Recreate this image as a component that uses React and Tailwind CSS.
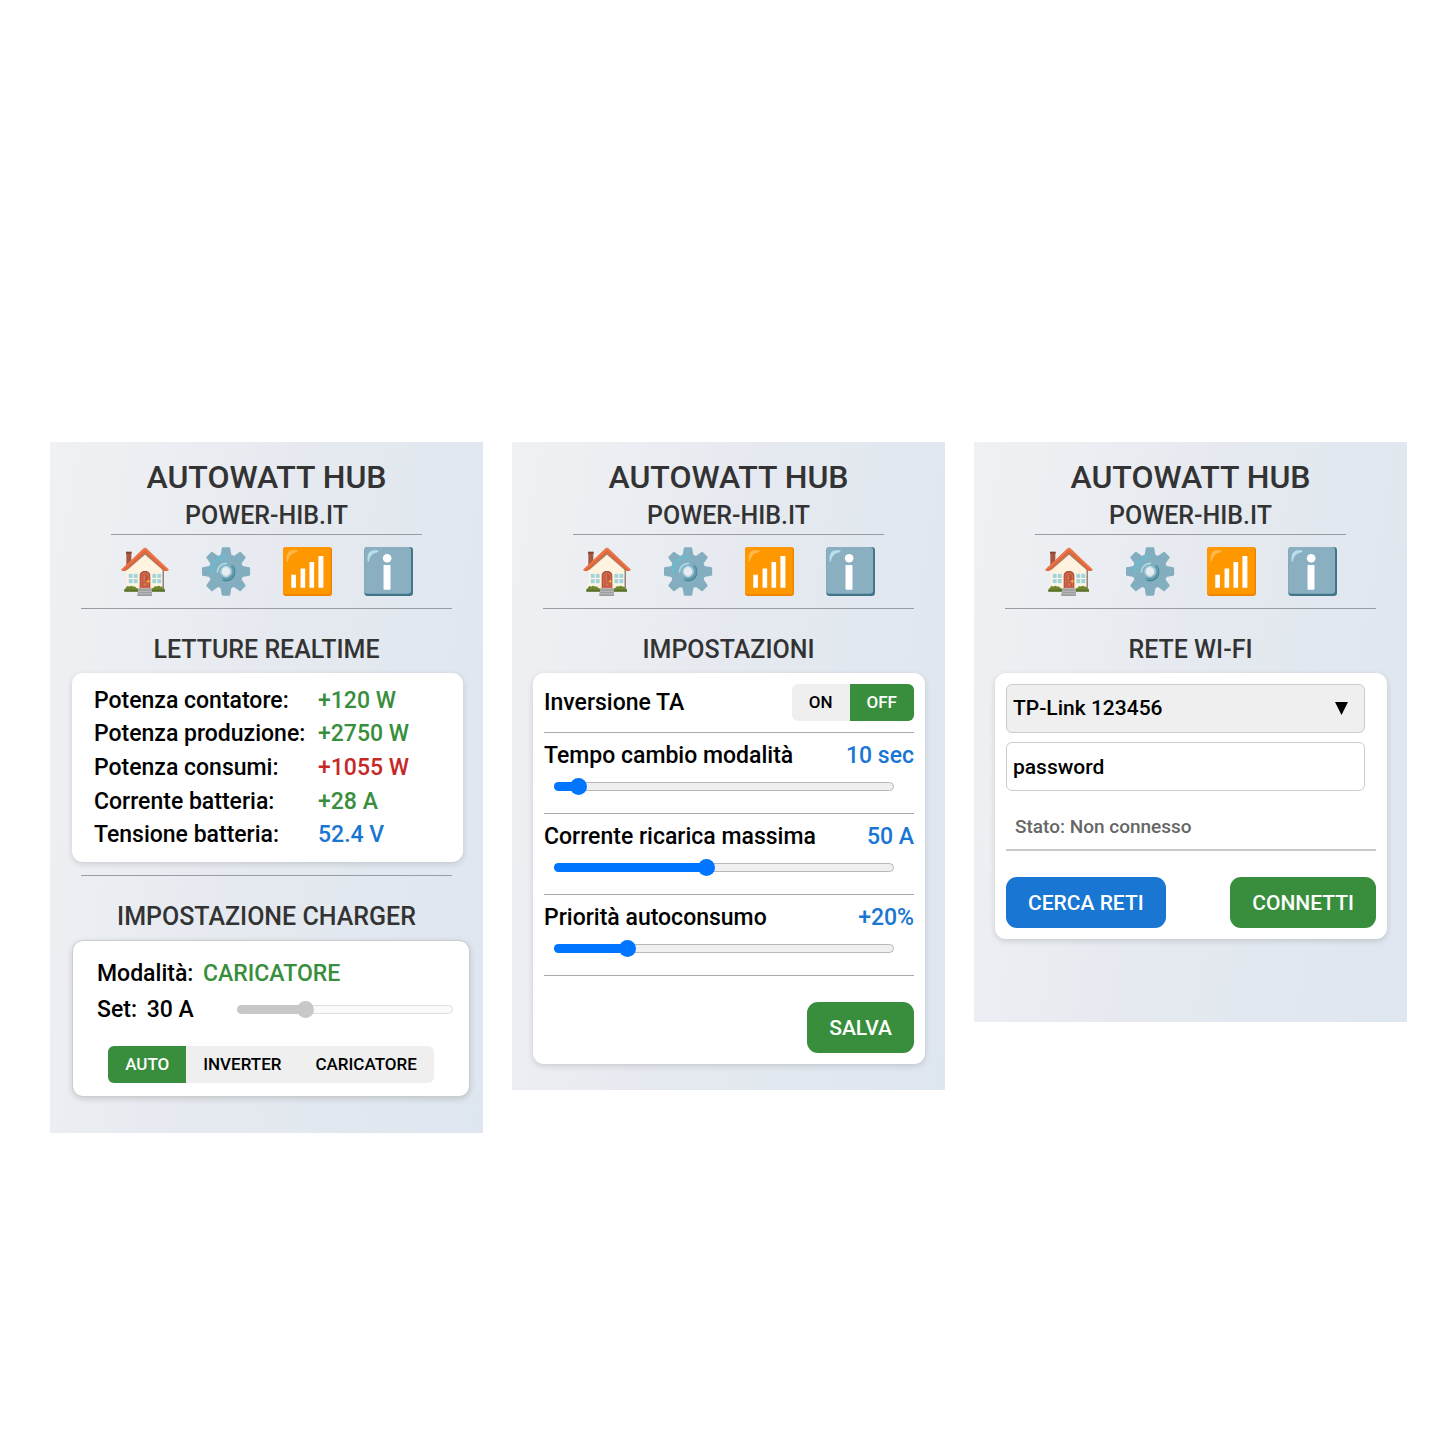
import { useState } from "react";

const cardClass = "mr-5 rounded-[11px] bg-white shadow-[0_2px_6px_rgba(0,0,0,0.14)]";
const actionClass = "h-[51px] rounded-[11px] px-[22px] pt-0.5 text-[21px] text-white cursor-pointer";

const readings = [
  { label: "Potenza contatore:", value: "+120 W", color: "text-[#388e3c]" },
  { label: "Potenza produzione:", value: "+2750 W", color: "text-[#388e3c]" },
  { label: "Potenza consumi:", value: "+1055 W", color: "text-[#c62828]" },
  { label: "Corrente batteria:", value: "+28 A", color: "text-[#388e3c]" },
  { label: "Tensione batteria:", value: "52.4 V", color: "text-[#1976d2]" },
];

const HomeIcon = () => (
  <svg viewBox="31 33 147 147" className="size-[49px]" aria-hidden="true">
    <path d="M47 49h15v30l-15 12z" fill="#a5573f" />
    <path d="M46 47h17v6H46z" fill="#854434" />
    <path d="M103 47 48 99v59h111V99z" fill="#fff3e0" />
    <path d="M156 96v62h3V98z" fill="#5d4a44" />
    <path d="M103 45 43 101h8l52-45 52 45h10z" fill="#8d5a45" opacity=".75" />
    <path d="M103 35c1.500 0 3 .8 4 1.800L173 100c1 2-1 5-4 5h-7l-59-55-59 55h-8c-3 0-4-3-3-5l66-63c1-1 2.500-2 4-2z" fill="#e0663c" />
    <path d="M103 35 33 100c-1 2 0 3 1 4l69-63 69 63c1-1 2-2 1-4z" fill="#f0794a" />
    <path d="M52 111h30v34H52zM124 111h30v34h-30z" fill="#fffaf0" />
    <path d="M54 113h12v13H54zM69 113h12v13H69zM54 129h12v13H54zM69 129h12v13H69zM125 113h12v13h-12zM140 113h12v13h-12zM125 129h12v13h-12zM140 129h12v13h-12z" fill="#a5d3d6" />
    <path d="M87 158v-39c0-8 6-14 16-14s16 6 16 14v39z" fill="#a14f3b" />
    <path d="M90 157v-37c0-6 5-11 13-11s13 5 13 11v37z" fill="#d4694c" />
    <path d="M94 134v-12c0-5 3-9 9-9s9 4 9 9v12zM94 139h18v13H94z" fill="#bb563f" />
    <path d="M98 133v-12c0-3 2-5 5-5v17zM98 142h10v7H98z" fill="#dc7758" />
    <circle cx="113" cy="136" r="4" fill="#f2b234" />
    <path d="M41 166c-1-5 1-9 5-10 2-6 7-7 10-4 4-4 9-3 11 0 4-2 8 0 9 3 5 0 7 4 7 11zM122 166c-1-6 2-11 7-11 2-4 6-5 9-3 4-4 9-3 11 0 5-2 8 1 8 4 5 1 7 5 6 10z" fill="#6f8630" />
    <path d="M41 161h42v6H41zM122 161h41v6h-41z" fill="#58702a" />
    <path d="M82 157h42v23H80v-10h2z" fill="#9d9d9d" />
    <path d="M82 157h42v3H82zM82 164h42v3H82zM80 172h45v3H80z" fill="#bdbdbd" />
  </svg>
);

const GearIcon = () => (
  <svg viewBox="276 31 147 147" className="size-[49px]" aria-hidden="true">
    <g fill="#82aec0">
      {[0, 45, 90, 135, 180, 225, 270, 315].map((angle) => (
        <path
          key={angle}
          d="M338 32h20c1.500 0 2.500 1 2.700 2.500L365 60h-34l4.300-25.500C335.500 33 336.500 32 338 32z"
          transform={`rotate(${angle} 348 104.500)`}
        />
      ))}
    </g>
    <circle cx="348" cy="104.500" r="33" fill="none" stroke="#82aec0" strokeWidth="39" />
    <path d="M304 106c-1-25 18-45 43-46" fill="none" stroke="#68bdd3" strokeWidth="7" strokeLinecap="round" />
    <path d="M322 106c0-14 11-25 27-26" fill="none" stroke="#a8dce8" strokeWidth="5" strokeLinecap="round" />
    <path d="M334 129c17 12 42 1 42-25 0-10-5-18-13-23 14 14 14 31 3 42-8 8-20 10-32 6z" fill="#2f7889" />
    <path d="M364 88c9 9 9 25-1 33-8 7-19 8-27 3" fill="none" stroke="#5d97aa" strokeWidth="5" />
    <circle cx="348" cy="104.500" r="15.500" fill="none" stroke="#b5dce6" strokeWidth="3" />
  </svg>
);

const SignalIcon = () => (
  <svg viewBox="38 30 148 148" className="size-[49px]" aria-hidden="true">
    <rect x="38" y="30" width="148" height="148" rx="9" fill="#ef8100" />
    <rect x="38" y="30" width="144" height="143" rx="8" fill="#ff9800" />
    <path d="M49 73c-2-13 1-24 7-29 6-5 15-5 23-4 4 1 4 5 0 6-15 3-22 10-26 26-1 4-4 4-4 1z" fill="#ffb94d" />
    <path d="M63 114h14v39H63zM91 95h14v58H91zM118 75h14v78h-14zM145 57h15v96h-15z" fill="#fff" />
  </svg>
);

const InfoIcon = () => (
  <svg viewBox="283 30 148 148" className="size-[49px]" aria-hidden="true">
    <rect x="284" y="30" width="147" height="148" rx="10" fill="#3f7789" />
    <rect x="284" y="30" width="141" height="141" rx="9" fill="#8aafc0" />
    <path d="M294 72c-2-13 1-23 7-28 6-5 15-5 23-4 4 1 4 5 0 6-15 3-22 10-26 26-1 4-4 3-4 0z" fill="#b8dfea" />
    <circle cx="353" cy="64" r="13" fill="#fff" />
    <rect x="342" y="84" width="21" height="75" rx="2" fill="#fff" />
  </svg>
);

const Header = () => (
  <header className="pt-4 text-center text-[#333]">
    <h1 className="text-[32px] leading-[38px]">AUTOWATT HUB</h1>
    <p className="mt-1 text-[25px] leading-8">POWER-HIB.IT</p>
    <hr className="mx-auto mt-0.5 w-[72%] border-[#999da3]" />
    <nav className="mx-[31px] flex justify-center gap-8 border-b border-[#999da3] py-3">
      <a href="#home" aria-label="Home"><HomeIcon /></a>
      <a href="#impostazioni" aria-label="Impostazioni"><GearIcon /></a>
      <a href="#rete" aria-label="Rete Wi-Fi"><SignalIcon /></a>
      <a href="#info" aria-label="Info"><InfoIcon /></a>
    </nav>
  </header>
);

const Panel = ({ children, className }) => (
  <section className={`bg-[linear-gradient(100deg,#f0f1f4,#e6eaf0_45%,#dee6ef)] ${className}`}>
    <Header />
    {children}
  </section>
);

const SectionTitle = ({ children }) => (
  <h2 className="mt-[25px] mb-[7px] text-center text-[25px] leading-8 text-[#333]">{children}</h2>
);

const Slider = ({ id, min = 0, max = 100, value, onChange, disabled }) => {
  const ratio = (value - min) / (max - min);

  return (
    <div className="relative flex h-[17px] w-full items-center">
      <span className={`absolute inset-x-0 h-[9px] rounded-full border ${disabled ? "border-[#e0e0e0] bg-[#fafafa]" : "border-[#b8b8b8] bg-[#efefef]"}`} />
      <span
        className={`absolute left-0 h-[9px] rounded-full ${disabled ? "bg-[#c8c8c8]" : "bg-[#0075ff]"}`}
        style={{ width: `calc(8px + (100% - 17px) * ${ratio})` }}
      />
      <input
        id={id}
        type="range"
        min={min}
        max={max}
        value={value}
        disabled={disabled}
        onChange={(e) => onChange(Number(e.target.value))}
        className="relative m-0 h-[17px] w-full appearance-none bg-transparent [&::-webkit-slider-thumb]:size-[17px] [&::-webkit-slider-thumb]:appearance-none [&::-webkit-slider-thumb]:rounded-full [&::-webkit-slider-thumb]:bg-[#0075ff] disabled:[&::-webkit-slider-thumb]:bg-[#c8c8c8]"
      />
    </div>
  );
};

const Segmented = ({ options, value, onChange }) => (
  <div className="flex h-[37px] overflow-hidden rounded-[6px] bg-[#efefef] text-[17px]">
    {options.map((option) => (
      <button
        key={option}
        type="button"
        aria-pressed={option === value}
        onClick={() => onChange(option)}
        className={`px-[17px] cursor-pointer ${option === value ? "bg-[#388e3c] text-white" : "text-black"}`}
      >
        {option}
      </button>
    ))}
  </div>
);

const SettingRow = ({ id, label, unit, prefix = "", min, max, initial }) => {
  const [value, setValue] = useState(initial);

  return (
    <div className="border-t border-[#a9a9a9] pt-[9px] pb-[18px]">
      <div className="flex justify-between leading-7">
        <label htmlFor={id}>{label}</label>
        <output htmlFor={id} className="text-[#1976d2]">{prefix}{value}{unit}</output>
      </div>
      <div className="mt-2 mr-5 ml-2.5">
        <Slider id={id} min={min} max={max} value={value} onChange={setValue} />
      </div>
    </div>
  );
};

const HomePanel = () => {
  const [mode, setMode] = useState("AUTO");
  const [amps, setAmps] = useState(30);

  return (
    <Panel className="pb-9">
      <SectionTitle>LETTURE REALTIME</SectionTitle>
      <div className={`${cardClass} ml-[22px] px-[22px] pt-[11px] pb-[10px]`}>
        <table className="h-[168px] w-full table-fixed text-left">
          <tbody>
            {readings.map((item) => (
              <tr key={item.label}>
                <th scope="row" className="w-56 p-0 font-medium leading-7">{item.label}</th>
                <td className={`p-0 leading-7 ${item.color}`}>{item.value}</td>
              </tr>
            ))}
          </tbody>
        </table>
      </div>

      <hr className="mx-[31px] mt-[13px] border-[#999da3]" />

      <SectionTitle>IMPOSTAZIONE CHARGER</SectionTitle>
      <div className="mr-[13px] ml-[22px] rounded-[11px] border border-[#ccc] bg-white px-6 pt-[19px] pb-[13px] shadow-[0_2px_6px_rgba(0,0,0,0.14)]">
        <p className="leading-7">
          Modalità: <span className="ml-1 text-[#388e3c]">CARICATORE</span>
        </p>
        <div className="-mr-2 mt-1.5 flex items-center leading-7">
          <label htmlFor="charger-set" className="w-[140px] shrink-0 pt-0.5">
            Set: <span className="ml-1">{amps} A</span>
          </label>
          <Slider id="charger-set" value={amps} onChange={setAmps} disabled />
        </div>
        <div className="mt-[22px] flex justify-center">
          <Segmented options={["AUTO", "INVERTER", "CARICATORE"]} value={mode} onChange={setMode} />
        </div>
      </div>
    </Panel>
  );
};

const SettingsPanel = () => {
  const [inversion, setInversion] = useState("OFF");

  return (
    <Panel className="pb-[26px]">
      <SectionTitle>IMPOSTAZIONI</SectionTitle>
      <form className={`${cardClass} ml-[21px] p-[11px]`} onSubmit={(e) => e.preventDefault()}>
        <div className="flex items-center justify-between pb-[11px]">
          <span className="pt-0.5">Inversione TA</span>
          <Segmented options={["ON", "OFF"]} value={inversion} onChange={setInversion} />
        </div>
        <SettingRow id="tempo" label="Tempo cambio modalità" unit=" sec" min={0} max={200} initial={10} />
        <SettingRow id="corrente" label="Corrente ricarica massima" unit=" A" min={10} max={100} initial={50} />
        <SettingRow id="priorita" label="Priorità autoconsumo" prefix="+" unit="%" min={0} max={100} initial={20} />
        <div className="flex justify-end border-t border-[#a9a9a9] pt-[26px]">
          <button type="submit" className={`${actionClass} bg-[#388e3c]`}>SALVA</button>
        </div>
      </form>
    </Panel>
  );
};

const WifiPanel = () => {
  const [password, setPassword] = useState("password");

  return (
    <Panel className="min-h-[580px]">
      <SectionTitle>RETE WI-FI</SectionTitle>
      <form className={`${cardClass} ml-[21px] p-[11px]`} onSubmit={(e) => e.preventDefault()}>
        <div className="relative mr-[11px]">
          <select aria-label="Rete" className="h-[49px] w-full appearance-none rounded-[6px] border border-[#ccc] bg-[#efefef] px-[6px] text-[21px]">
            <option>TP-Link 123456</option>
          </select>
          <span className="pointer-events-none absolute inset-y-0 right-[17px] flex items-center">
            <svg viewBox="0 0 13 13" className="size-[13px]" aria-hidden="true"><path d="M0 0h13L6.500 13z" /></svg>
          </span>
        </div>
        <div className="mt-[9px] mr-[11px]">
          <input
            type="text"
            aria-label="Password"
            value={password}
            onChange={(e) => setPassword(e.target.value)}
            className="h-[49px] w-full rounded-[6px] border border-[#ccc] bg-white px-[6px] text-[21px]"
          />
        </div>
        <p className="mt-[22px] border-b-2 border-[#c8c8c8] px-[9px] pb-2 text-[19px] leading-7 text-[#666]">Stato: Non connesso</p>
        <div className="mt-[26px] flex justify-between">
          <button type="button" className={`${actionClass} bg-[#1976d2]`}>CERCA RETI</button>
          <button type="submit" className={`${actionClass} bg-[#388e3c]`}>CONNETTI</button>
        </div>
      </form>
    </Panel>
  );
};

const App = () => {
  return (
    <main className="grid min-h-screen grid-cols-3 items-start gap-[29px] bg-white pt-[442px] pr-[38px] pl-[50px] font-[Roboto,sans-serif] text-[23px] font-medium text-black">
      <HomePanel />
      <SettingsPanel />
      <WifiPanel />
    </main>
  );
};

export default App;
